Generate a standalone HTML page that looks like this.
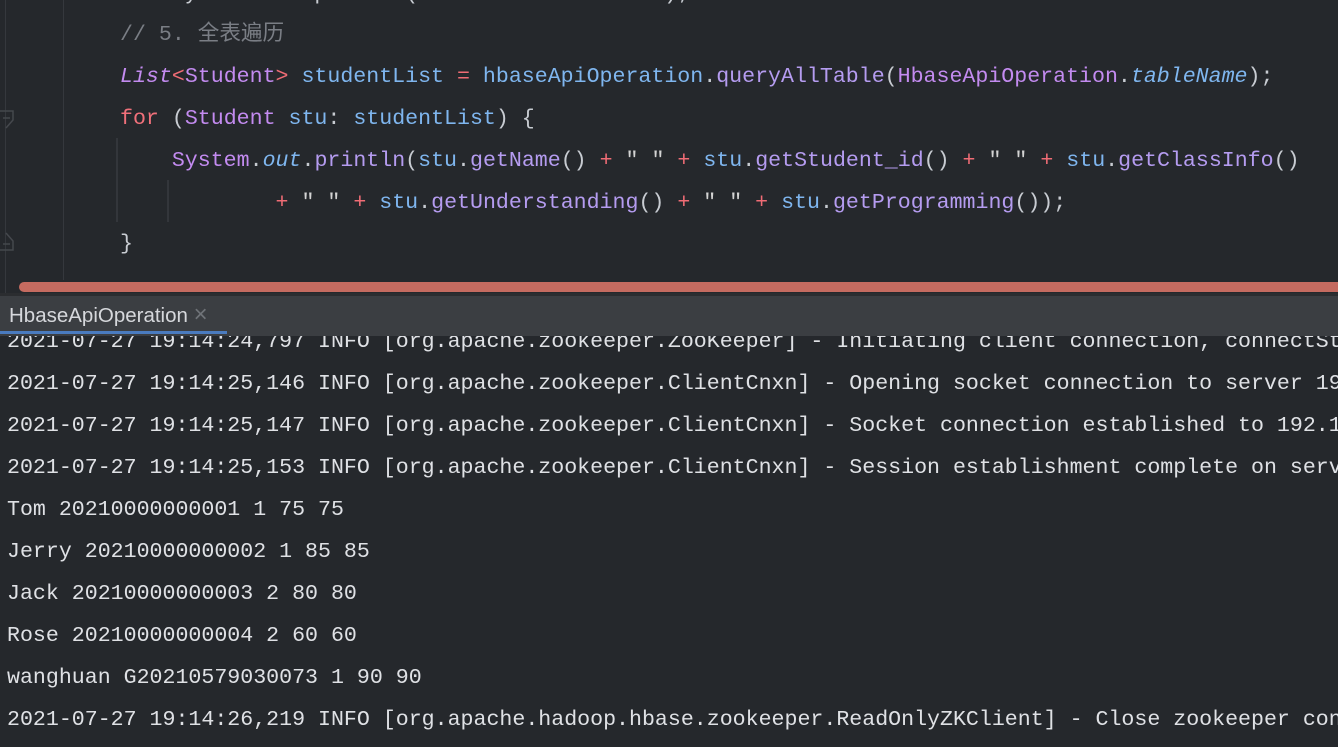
<!DOCTYPE html>
<html><head><meta charset="utf-8"><style>
body{margin:0;width:1338px;height:747px;overflow:hidden;background:#25282c;position:relative;font-family:"Liberation Mono","Noto Sans CJK SC",monospace;}
.l{position:absolute;white-space:pre;font-size:21.6px;line-height:42px;height:42px;color:#bcbec4;}
.cm{color:#7a7e85}.kw{color:#f0707a}.ty{color:#c38bf0}.it{font-style:italic}.v{color:#7fb6ef}.m{color:#b59cf0}.op{color:#f06c75}.s{color:#d4d4d4}.p{color:#c8ccd2}
.con{color:#dfe1e5}
</style></head><body>
<div style="position:absolute;left:5px;top:0;width:1px;height:295px;background:#35383d"></div>
<div style="position:absolute;left:63px;top:0;width:1px;height:280px;background:#35383d"></div>
<div style="position:absolute;left:116px;top:138px;width:2px;height:84px;background:#33363b"></div>
<div style="position:absolute;left:167px;top:180px;width:2px;height:42px;background:#33363b"></div>
<svg style="position:absolute;left:0;top:108px" width="16" height="145"><path d="M0 3H13V12L6 20" fill="none" stroke="#45484d" stroke-width="1.5"/><path d="M3 10H10" stroke="#45484d" stroke-width="1.5"/><path d="M6 125L13 133V142H0" fill="none" stroke="#45484d" stroke-width="1.5"/><path d="M3 136H10" stroke="#45484d" stroke-width="1.5"/></svg>
<div class="l" style="left:120px;top:-27px"><span class="p">    System.out.println("                  );</span></div>
<div class="l cm" style="left:120px;top:14px">// 5. 全表遍历</div>
<div class="l" style="left:120px;top:56px"><span class="ty it">List</span><span class="op">&lt;</span><span class="ty">Student</span><span class="op">&gt;</span> <span class="v">studentList</span> <span class="op">=</span> <span class="v">hbaseApiOperation</span><span class="p">.</span><span class="m">queryAllTable</span><span class="p">(</span><span class="ty">HbaseApiOperation</span><span class="p">.</span><span class="v it">tableName</span><span class="p">);</span></div>
<div class="l" style="left:120px;top:98px"><span class="kw">for</span> <span class="p">(</span><span class="ty">Student</span> <span class="v">stu</span><span class="p">:</span> <span class="v">studentList</span><span class="p">) {</span></div>
<div class="l" style="left:120px;top:140px">    <span class="ty">System</span><span class="p">.</span><span class="v it">out</span><span class="p">.</span><span class="m">println</span><span class="p">(</span><span class="v">stu</span><span class="p">.</span><span class="m">getName</span><span class="p">()</span> <span class="op">+</span> <span class="s">" "</span> <span class="op">+</span> <span class="v">stu</span><span class="p">.</span><span class="m">getStudent_id</span><span class="p">()</span> <span class="op">+</span> <span class="s">" "</span> <span class="op">+</span> <span class="v">stu</span><span class="p">.</span><span class="m">getClassInfo</span><span class="p">()</span></div>
<div class="l" style="left:120px;top:182px">            <span class="op">+</span> <span class="s">" "</span> <span class="op">+</span> <span class="v">stu</span><span class="p">.</span><span class="m">getUnderstanding</span><span class="p">()</span> <span class="op">+</span> <span class="s">" "</span> <span class="op">+</span> <span class="v">stu</span><span class="p">.</span><span class="m">getProgramming</span><span class="p">());</span></div>
<div class="l p" style="left:120px;top:223px">}</div>
<div style="position:absolute;left:19px;top:282px;width:1330px;height:10px;border-radius:5px;background:#c56b60"></div>
<div style="position:absolute;left:0;top:293px;width:1338px;height:3px;background:#2b2d30"></div>
<div style="position:absolute;left:0;top:296px;width:1338px;height:40px;background:#3b3e42"></div>
<div style="position:absolute;left:9px;top:304px;font-family:'Liberation Sans',sans-serif;font-size:20.5px;color:#d6d8dc">HbaseApiOperation <span style="color:#6f7378;font-size:24px;line-height:20px">×</span></div>
<div style="position:absolute;left:0;top:331px;width:227px;height:3px;background:#4a7bbf"></div>
<div style="position:absolute;left:0;top:336px;width:1338px;height:411px;overflow:hidden">
<div class="l con" style="left:7px;top:-15px">2021-07-27 19:14:24,797 INFO [org.apache.zookeeper.ZooKeeper] - Initiating client connection, connectString</div>
<div class="l con" style="left:7px;top:27px">2021-07-27 19:14:25,146 INFO [org.apache.zookeeper.ClientCnxn] - Opening socket connection to server 192.168</div>
<div class="l con" style="left:7px;top:69px">2021-07-27 19:14:25,147 INFO [org.apache.zookeeper.ClientCnxn] - Socket connection established to 192.168</div>
<div class="l con" style="left:7px;top:111px">2021-07-27 19:14:25,153 INFO [org.apache.zookeeper.ClientCnxn] - Session establishment complete on server</div>
<div class="l con" style="left:7px;top:153px">Tom 20210000000001 1 75 75</div>
<div class="l con" style="left:7px;top:195px">Jerry 20210000000002 1 85 85</div>
<div class="l con" style="left:7px;top:237px">Jack 20210000000003 2 80 80</div>
<div class="l con" style="left:7px;top:279px">Rose 20210000000004 2 60 60</div>
<div class="l con" style="left:7px;top:321px">wanghuan G20210579030073 1 90 90</div>
<div class="l con" style="left:7px;top:363px">2021-07-27 19:14:26,219 INFO [org.apache.hadoop.hbase.zookeeper.ReadOnlyZKClient] - Close zookeeper connection</div>
</div>
</body></html>
